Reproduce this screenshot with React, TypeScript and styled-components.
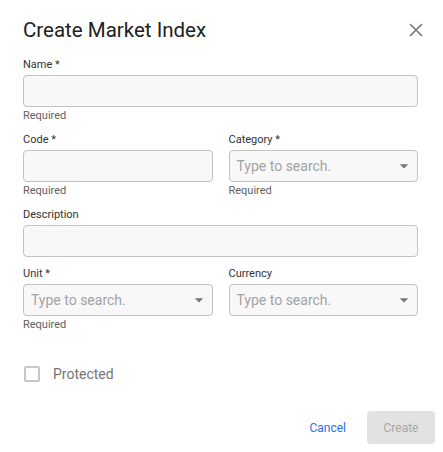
import React from 'react';
import styled, { createGlobalStyle } from 'styled-components';

const GlobalStyle = createGlobalStyle`
	* {
		box-sizing: border-box;
	}
	body {
		margin: 0;
		background: #ffffff;
		font-family: Roboto, 'Liberation Sans', Arial, sans-serif;
	}
`;

const Dialog = styled.section`
	width: 441px;
	height: 452px;
	background: #ffffff;
	border-radius: 4px;
	display: flex;
	flex-direction: column;
`;

const Header = styled.header`
	display: flex;
	align-items: center;
	justify-content: space-between;
	height: 58px;
	padding: 1px 12px 0 23px;
`;

const Title = styled.h2`
	margin: 0;
	font-size: 20.5px;
	font-weight: 400;
	color: #212121;
`;

const CloseButton = styled.button`
	display: flex;
	align-items: center;
	justify-content: center;
	width: 26px;
	height: 26px;
	padding: 0;
	border: none;
	background: transparent;
	color: #757575;
	cursor: pointer;
`;

const Form = styled.div`
	display: flex;
	flex-direction: column;
	gap: 10px;
	padding: 0 23px;
`;

const Row = styled.div`
	display: grid;
	grid-template-columns: 1fr 1fr;
	column-gap: 16px;
`;

const Field = styled.div`
	display: flex;
	flex-direction: column;
`;

const Label = styled.label`
	font-size: 11px;
	line-height: 14px;
	color: #333333;
	margin-bottom: 3px;
`;

const InputBox = styled.div`
	display: flex;
	align-items: center;
	height: 32px;
	padding: 0 3px 0 7px;
	background: #f8f8f8;
	border: 1px solid #c2c2c2;
	border-radius: 4px;
`;

const Placeholder = styled.span`
	flex: 1;
	font-size: 14px;
	color: #a3a3a3;
`;

const Helper = styled.span`
	margin-top: 2px;
	font-size: 11px;
	line-height: 14px;
	color: #616161;
`;

const CheckRow = styled.label`
	display: flex;
	align-items: center;
	gap: 13px;
	margin: 34px 0 0 24px;
	font-size: 14px;
	color: #757575;
`;

const CheckBox = styled.span`
	width: 16px;
	height: 16px;
	border: 2px solid #c6c6c6;
	border-radius: 2px;
`;

const Footer = styled.footer`
	display: flex;
	align-items: center;
	justify-content: flex-end;
	gap: 13px;
	margin-top: auto;
	padding: 0 6px 8px 0;
`;

const TextButton = styled.button`
	border: none;
	background: transparent;
	padding: 8px;
	font-family: inherit;
	font-size: 12px;
	color: #2f6fe8;
	cursor: pointer;
`;

const PrimaryButton = styled.button`
	width: 68px;
	height: 33px;
	border: none;
	border-radius: 4px;
	background: #e2e2e2;
	font-family: inherit;
	font-size: 12px;
	color: #a8a8a8;
`;

const ArrowDown = () => (
	<svg width="20" height="20" viewBox="0 0 24 24" fill="#757575">
		<path d="M7 10l5 5 5-5z" />
	</svg>
);

const CloseIcon = () => (
	<svg width="14" height="14" viewBox="0 0 14 14" stroke="currentColor" strokeWidth="1.6">
		<path d="M1 1l12 12M13 1L1 13" />
	</svg>
);

interface FieldProps {
	label: string;
	helper?: string;
	search?: boolean;
}

const FormField = ({ label, helper, search }: FieldProps) => (
	<Field>
		<Label>{label}</Label>
		<InputBox>
			{search && (
				<>
					<Placeholder>Type to search.</Placeholder>
					<ArrowDown />
				</>
			)}
		</InputBox>
		{helper && <Helper>{helper}</Helper>}
	</Field>
);

export default function App() {
	return (
		<>
			<GlobalStyle />
			<Dialog>
				<Header>
					<Title>Create Market Index</Title>
					<CloseButton aria-label="close">
						<CloseIcon />
					</CloseButton>
				</Header>
				<Form>
					<FormField label="Name *" helper="Required" />
					<Row>
						<FormField label="Code *" helper="Required" />
						<FormField label="Category *" helper="Required" search />
					</Row>
					<FormField label="Description" />
					<Row>
						<FormField label="Unit *" helper="Required" search />
						<FormField label="Currency" search />
					</Row>
				</Form>
				<CheckRow>
					<CheckBox />
					Protected
				</CheckRow>
				<Footer>
					<TextButton>Cancel</TextButton>
					<PrimaryButton>Create</PrimaryButton>
				</Footer>
			</Dialog>
		</>
	);
}
